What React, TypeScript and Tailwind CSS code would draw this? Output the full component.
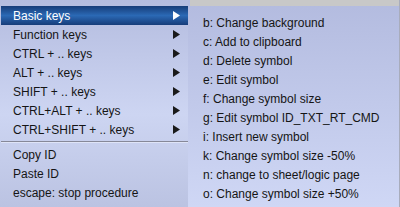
import React from "react";

const Arrow = ({ white }: { white?: boolean }) => (
  <svg width="8" height="10" viewBox="0 0 8 10" className="block">
    <polygon points="0,0 7,4.5 0,9" fill={white ? "#ffffff" : "#1a1a1a"} />
  </svg>
);

const subItems = [
  "Basic keys",
  "Function keys",
  "CTRL + .. keys",
  "ALT + .. keys",
  "SHIFT + .. keys",
  "CTRL+ALT + .. keys",
  "CTRL+SHIFT + .. keys",
];

const plainItems = ["Copy ID", "Paste ID", "escape: stop procedure"];

const rightItems = [
  "b: Change background",
  "c: Add to clipboard",
  "d: Delete symbol",
  "e: Edit symbol",
  "f: Change symbol size",
  "g: Edit symbol ID_TXT_RT_CMD",
  "i: Insert new symbol",
  "k: Change symbol size -50%",
  "n: change to sheet/logic page",
  "o: Change symbol size +50%",
];

export default function App() {
  return (
    <div
      className="w-[400px] h-[207px] flex overflow-hidden text-[12px] leading-none text-[#151515]"
      style={{ fontFamily: '"Liberation Sans", Arial, sans-serif' }}
    >
      <div className="w-[188px] h-full pt-[6px] pl-[1px] flex flex-col bg-[linear-gradient(to_bottom,#b4bcdf_0%,#cdd5f2_55%,#bbc3e2_100%)]">
        {subItems.map((t, i) => (
          <div
            key={t}
            className={
              i === 0
                ? "h-[19px] flex items-center justify-between pl-[12px] pr-[7px] text-white bg-[linear-gradient(to_bottom,#163c78_0%,#2b69b5_50%,#173d7a_100%)]"
                : "h-[19px] flex items-center justify-between pl-[12px] pr-[7px]"
            }
          >
            <span>{t}</span>
            <Arrow white={i === 0} />
          </div>
        ))}
        <div className="mt-[2px] h-[1px] bg-[#868898]" />
        <div className="h-[1px] bg-[#dfe4f7] mb-[2px]" />
        {plainItems.map((t) => (
          <div key={t} className="h-[19px] flex items-center pl-[12px]">
            <span>{t}</span>
          </div>
        ))}
      </div>
      <div className="flex-1 h-full flex flex-col bg-[linear-gradient(to_bottom,#b3bbdf_0%,#cfd7f5_100%)] border-r border-[#a8acbc]">
        <div className="ml-[2px] h-[6px] bg-[#c8c8c8] shrink-0" />
        <div className="pt-[7px] pl-[15px] flex flex-col">
          {rightItems.map((t) => (
            <div key={t} className="h-[19px] flex items-center">
              <span>{t}</span>
            </div>
          ))}
        </div>
      </div>
    </div>
  );
}
